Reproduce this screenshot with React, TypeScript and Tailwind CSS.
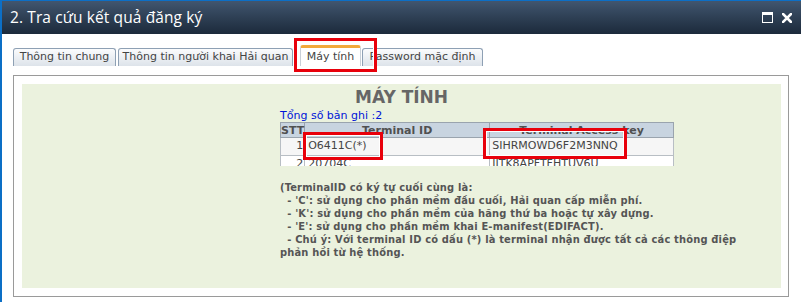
import React from "react";

const tabs = [
  { label: "Thông tin chung", w: "w-[103px]" },
  { label: "Thông tin người khai Hải quan", w: "w-[175px]" },
];

function TitleBar() {
  return (
    <div className="h-[33px] flex items-center justify-between bg-gradient-to-b from-[#41566f] to-[#1c2a3b] pl-[8px] pr-[9px]">
      <span className="text-white text-[15.5px] font-['Open_Sans',sans-serif] tracking-[0.1px]">
        2. Tra cứu kết quả đăng ký
      </span>
      <div className="flex items-center gap-[9px]">
        <svg width="11" height="11" viewBox="0 0 11 11">
          <rect x="0.5" y="0.5" width="10" height="10" fill="none" stroke="#fff" strokeWidth="1" />
          <rect x="0.5" y="0.5" width="10" height="2.5" fill="#fff" />
        </svg>
        <svg width="10" height="10" viewBox="0 0 10 10">
          <path d="M1 1 L9 9 M9 1 L1 9" stroke="#fff" strokeWidth="2.6" strokeLinecap="square" />
        </svg>
      </div>
    </div>
  );
}

function Tabs() {
  return (
    <div className="flex items-end h-[21px] font-['DejaVu_Sans',sans-serif] text-[11px] text-[#444]">
      {tabs.map((t) => (
        <div
          key={t.label}
          className={`${t.w} mr-[2px] h-[18px] flex items-center justify-center rounded-t-[3px] border border-b-0 border-[#8ea0b4] bg-gradient-to-b from-[#fbfcfd] to-[#dde3ea] whitespace-nowrap`}
        >
          {t.label}
        </div>
      ))}
      <div className="w-[61px] ml-[5px] h-[21px] flex items-center justify-center rounded-t-[3px] border border-b-0 border-[#c9d0d8] border-t-[3px] border-t-[#f2a93b] bg-white whitespace-nowrap pt-[1px]">
        Máy tính
      </div>
      <div className="w-[121px] ml-[1px] h-[18px] flex items-center justify-center rounded-t-[3px] border border-b-0 border-[#8ea0b4] bg-gradient-to-b from-[#fbfcfd] to-[#dde3ea] whitespace-nowrap">
        Password mặc định
      </div>
    </div>
  );
}

function TerminalTable() {
  return (
    <div className="h-[44px] overflow-hidden w-[394px]">
      <table className="w-full border-collapse font-['DejaVu_Sans',sans-serif] text-[11px]">
        <thead>
          <tr className="bg-[#c8d4e0] text-[#505050] font-bold h-[15px]">
            <th className="w-[22px] border border-[#9aa4ae] px-0 text-left leading-[13px]">STT</th>
            <th className="w-[185px] border border-[#9aa4ae] leading-[13px]">Terminal ID</th>
            <th className="border border-[#9aa4ae] leading-[13px]">Terminal Access key</th>
          </tr>
        </thead>
        <tbody className="text-[#444]">
          <tr className="bg-[#f6f6f6] h-[17px]">
            <td className="border border-[#b8bec4] text-right pr-[1px]">1</td>
            <td className="border border-[#b8bec4] pl-[3px]">O6411C(*)</td>
            <td className="border border-[#b8bec4] pl-[2px]">SIHRMOWD6F2M3NNQ</td>
          </tr>
          <tr className="bg-white h-[16px]">
            <td className="border border-[#b8bec4] text-right pr-[1px]">2</td>
            <td className="border border-[#b8bec4] pl-[3px]">20704C</td>
            <td className="border border-[#b8bec4] pl-[2px]">JITK8APFTFHTUV6U</td>
          </tr>
        </tbody>
      </table>
    </div>
  );
}

function Highlight({ className }: { className: string }) {
  return (
    <div className={`absolute border-[3px] border-[#e8000b] pointer-events-none ${className}`}>
      <div className="w-full h-full border border-white" />
    </div>
  );
}

export default function App() {
  return (
    <div className="relative w-[801px] h-[302px] overflow-hidden bg-white border-l-2 border-t border-[#0c6fc6]">
      <TitleBar />
      <div className="pl-[11px] pt-[11px]">
        <Tabs />
        <div className="mt-[9px] w-[776px] h-[222px] border border-[#9a9a9a] p-[8px] pr-[7px]">
          <div className="h-full bg-[#ebf2de] pt-[3px]">
            <div className="text-center font-['DejaVu_Sans',sans-serif] font-bold text-[17px] text-[#666] leading-[20px]">
              MÁY TÍNH
            </div>
            <div className="ml-[258px] mt-[2px]">
              <div className="font-['DejaVu_Sans',sans-serif] text-[11px] text-[#0014d8] leading-[13px]">
                Tổng số bản ghi :2
              </div>
              <TerminalTable />
              <div className="mt-[15px] font-['DejaVu_Sans_Condensed','DejaVu_Sans',sans-serif] font-bold text-[11px] tracking-[0.18px] leading-[13px] text-[#555] whitespace-pre">
                {"(TerminalID có ký tự cuối cùng là:\n  - 'C': sử dụng cho phần mềm đầu cuối, Hải quan cấp miễn phí.\n  - 'K': sử dụng cho phần mềm của hãng thứ ba hoặc tự xây dựng.\n  - 'E': sử dụng cho phần mềm khai E-manifest(EDIFACT).\n  - Chú ý: Với terminal ID có dấu (*) là terminal nhận được tất cả các thông điệp\nphản hồi từ hệ thống."}
              </div>
            </div>
          </div>
        </div>
      </div>
      <Highlight className="left-[292px] top-[37px] w-[83px] h-[34px]" />
      <Highlight className="left-[301px] top-[131px] w-[80px] h-[28px]" />
      <Highlight className="left-[481px] top-[127px] w-[144px] h-[31px]" />
    </div>
  );
}
